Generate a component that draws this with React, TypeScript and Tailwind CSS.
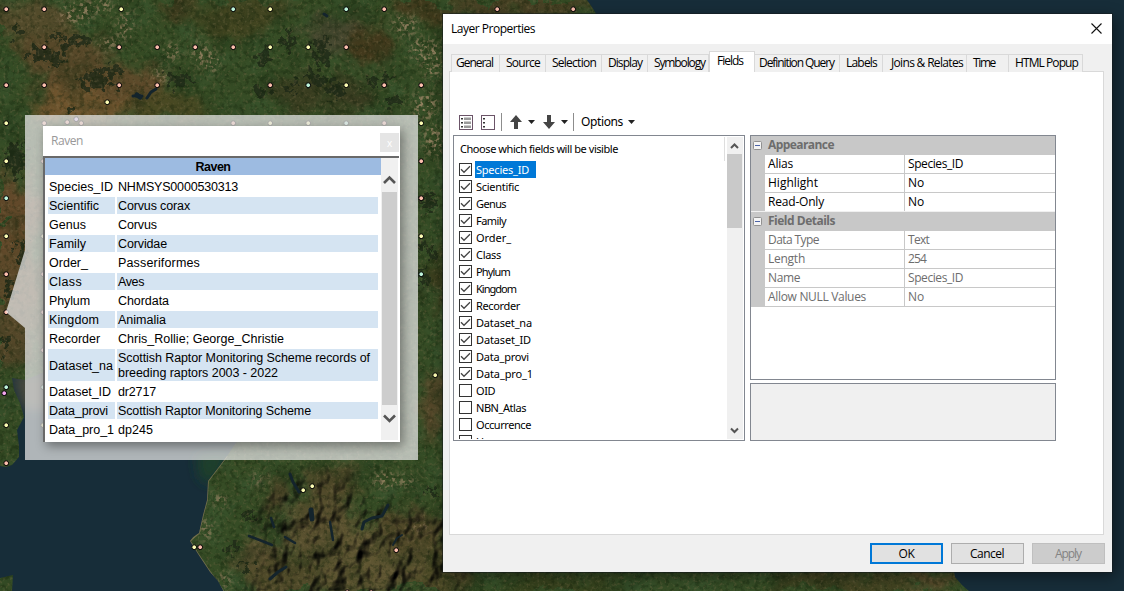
import { useLayoutEffect, useRef } from "react";
import type { ReactNode } from "react";

/** A single line of text whose tracking is adjusted so that it spans `w` pixels. */
function Fit({ w, children, className = "" }: { w: number; children: string; className?: string }) {
  const ref = useRef<HTMLSpanElement>(null);
  useLayoutEffect(() => {
    const el = ref.current;
    if (!el) return;
    el.style.letterSpacing = "0px";
    const natural = el.getBoundingClientRect().width;
    el.style.letterSpacing = `${(w - natural) / children.length}px`;
  }, [w, children]);
  return (
    <span ref={ref} className={`inline-block whitespace-pre ${className}`}>
      {children}
    </span>
  );
}

/* ---------- map ---------- */

const PINK = "#fdbfae";
const YELLOW = "#fdfdb4";
const MINT = "#bff5dc";
const VIOLET = "#f3a6ee";
const LILAC = "#d8b8e8";

const points: [number, number, string][] = [
  [6, 9, PINK], [44, 9, PINK], [121, 9, YELLOW], [233, 9, MINT], [270, 9, YELLOW], [346, 9, MINT], [384, 9, PINK], [497, 9, PINK], [573, 9, PINK],
  [44, 47, PINK], [119, 47, PINK], [157, 47, PINK], [195, 47, PINK], [233, 47, PINK], [270, 47, YELLOW], [308, 47, YELLOW], [346, 47, PINK],
  [6, 85, PINK], [44, 85, PINK], [119, 85, PINK], [157, 85, PINK], [270, 85, PINK], [308, 85, MINT], [346, 85, YELLOW], [384, 85, PINK], [421, 85, PINK],
  [107, 102, YELLOW],
  [6, 123, YELLOW], [44, 123, PINK], [67, 122, PINK], [76, 119, LILAC], [81, 123, PINK], [233, 123, PINK], [270, 123, YELLOW], [308, 123, YELLOW], [346, 123, MINT], [384, 123, PINK], [421, 123, YELLOW],
  [6, 161, YELLOW], [421, 161, PINK], [6, 198, MINT], [421, 198, PINK], [6, 236, YELLOW], [421, 236, YELLOW], [6, 274, PINK], [421, 274, MINT], [6, 312, PINK],
  [435, 375, YELLOW], [6, 387, MINT], [4, 393, VIOLET], [6, 425, YELLOW], [6, 463, PINK],
  [43, 161, PINK], [43, 236, YELLOW], [43, 274, PINK], [43, 312, PINK], [43, 350, PINK], [43, 387, MINT], [43, 425, YELLOW],
  [303, 490, YELLOW], [312, 486, YELLOW], [194, 547, YELLOW], [200, 547, PINK], [396, 550, PINK], [347, 592, PINK], [371, 592, PINK],
];

const moors: [number, number, number, number, string][] = [
  [25, 22, 46, 17, "#564b2c"], [60, 52, 46, 20, "#5a482a"], [104, 88, 66, 24, "#624a2b"], [80, 108, 52, 16, "#75562f"],
  [170, 106, 40, 12, "#4b4822"], [178, 8, 16, 14, "#4a3f21"], [232, 18, 38, 20, "#434420"], [262, 6, 34, 10, "#454622"],
  [335, 35, 32, 20, "#484831"], [368, 45, 24, 18, "#44381c"], [425, 8, 30, 14, "#443a1d"], [520, 5, 70, 12, "#4c4125"],
  [300, 92, 26, 18, "#3a3c20"], [350, 96, 26, 16, "#393a20"],
  [10, 225, 28, 54, "#66492b"], [18, 285, 26, 38, "#60482a"], [12, 340, 28, 26, "#57472a"],
  [436, 405, 14, 34, "#58482b"], [440, 280, 11, 34, "#3b3a1c"], [430, 570, 40, 32, "#504a28"],
  [332, 482, 26, 20, "#53492a"], [275, 500, 14, 20, "#4a4226"], [262, 558, 26, 20, "#655535"], [320, 530, 34, 32, "#5c5130"], [370, 560, 56, 34, "#625633"],
  [285, 580, 40, 22, "#524a2a"], [410, 530, 30, 24, "#54492a"], [560, 585, 60, 10, "#37401c"], [850, 582, 80, 12, "#464322"], [930, 580, 24, 10, "#5b492b"],
];

const woods: [number, number, number, number][] = [
  [18, 31, 6, 4], [55, 36, 8, 3], [42, 55, 13, 6], [68, 44, 9, 5], [80, 40, 8, 6], [58, 61, 9, 5], [93, 80, 12, 9], [110, 70, 11, 6],
  [112, 86, 6, 3], [70, 110, 4, 4], [290, 40, 5, 12], [264, 58, 6, 8], [322, 52, 9, 13], [336, 90, 9, 8], [292, 86, 6, 6], [262, 92, 6, 5],
  [178, 80, 12, 7], [318, 81, 8, 6], [428, 204, 8, 10], [424, 245, 5, 6], [432, 255, 6, 5], [424, 277, 5, 10], [430, 490, 7, 3],
  [22, 255, 5, 14], [10, 290, 6, 8], [16, 160, 10, 18], [6, 345, 4, 9], [250, 518, 7, 4], [232, 548, 6, 4], [245, 566, 8, 3],
  [310, 75, 5, 3], [372, 82, 7, 4], [386, 78, 6, 3], [395, 100, 7, 4],
];

const towns: [number, number, number, number][] = [
  [75, 14, 14, 8], [98, 5, 14, 5], [125, 25, 5, 12], [108, 44, 10, 3], [200, 52, 6, 8], [210, 62, 8, 8], [172, 52, 6, 6], [405, 25, 10, 8],
  [420, 50, 8, 10], [432, 60, 7, 18], [425, 105, 10, 12], [160, 75, 5, 5], [434, 140, 8, 14], [407, 481, 5, 4], [420, 525, 5, 3], [220, 500, 5, 4],
  [206, 530, 5, 8], [225, 580, 4, 5], [260, 479, 7, 3], [385, 480, 10, 6],
];

function SatelliteMap() {
  return (
    <svg className="absolute inset-0" width="1124" height="591" viewBox="0 0 1124 591">
      <defs>
        <clipPath id="land">
          <path d="M0 0H587L592 7L598 17L604 30L620 60V560H952L955 577L962 585L970 592H224L218 581L210 572L198 554L190 541L193 537L199 533L203 515L207 500L208 481L218 468L227 456L238 440L252 420L240 405L190 400L130 385L90 378L45 372L25 380L12 378L14 390L20 403L24 417L17 430L19 446L19 457L12 465L6 467L0 466Z" />
          <path d="M0 578L13 575L12 592H0Z" />
        </clipPath>
        <filter id="blur" x="-30%" y="-30%" width="160%" height="160%">
          <feGaussianBlur stdDeviation="6" />
        </filter>
        <filter id="rough" x="0" y="0" width="1124" height="591" filterUnits="userSpaceOnUse" colorInterpolationFilters="sRGB">
          <feGaussianBlur stdDeviation="6" result="b" />
          <feTurbulence type="fractalNoise" baseFrequency="0.04" numOctaves="4" seed="4" result="n" />
          <feDisplacementMap in="b" in2="n" scale="34" xChannelSelector="R" yChannelSelector="G" />
        </filter>
        <filter id="ragged" x="0" y="0" width="1124" height="591" filterUnits="userSpaceOnUse" colorInterpolationFilters="sRGB">
          <feTurbulence type="fractalNoise" baseFrequency="0.13" numOctaves="3" seed="9" result="n" />
          <feDisplacementMap in="SourceGraphic" in2="n" scale="26" xChannelSelector="R" yChannelSelector="G" />
          <feGaussianBlur stdDeviation="0.5" />
        </filter>
        <filter id="speckle" x="0" y="0" width="1124" height="591" filterUnits="userSpaceOnUse" colorInterpolationFilters="sRGB">
          <feTurbulence type="fractalNoise" baseFrequency="0.25" numOctaves="2" seed="12" result="n" />
          <feColorMatrix in="n" type="matrix" values="0 0 0 0 0  0 0 0 0 0  0 0 0 0 0  6 0 0 0 -3" result="m" />
          <feGaussianBlur in="SourceGraphic" stdDeviation="4" result="s" />
          <feComposite in="s" in2="m" operator="in" />
        </filter>
        <filter id="mottle" x="0" y="0" width="1124" height="591" filterUnits="userSpaceOnUse" colorInterpolationFilters="sRGB">
          <feTurbulence type="fractalNoise" baseFrequency="0.035" numOctaves="5" seed="21" />
          <feColorMatrix type="matrix" values="0 0 0 0 0.10  0 0 0 0 0.17  0 0 0 0 0.07  3 0 0 0 -1.45" />
        </filter>
        <filter id="meadow" x="0" y="0" width="1124" height="591" filterUnits="userSpaceOnUse" colorInterpolationFilters="sRGB">
          <feTurbulence type="fractalNoise" baseFrequency="0.04" numOctaves="4" seed="33" />
          <feColorMatrix type="matrix" values="0 0 0 0 0.23  0 0 0 0 0.35  0 0 0 0 0.20  0 3 0 0 -1.3" />
        </filter>
        <filter id="grain" x="0" y="0" width="1124" height="591" filterUnits="userSpaceOnUse" colorInterpolationFilters="sRGB">
          <feTurbulence type="fractalNoise" baseFrequency="0.3" numOctaves="2" seed="5" />
          <feColorMatrix type="matrix" values="0 0 0 0 0.50  0 0 0 0 0.44  0 0 0 0 0.30  0 0 4 0 -2.2" />
        </filter>
        <filter id="shade" x="0" y="0" width="1124" height="591" filterUnits="userSpaceOnUse" colorInterpolationFilters="sRGB">
          <feTurbulence type="fractalNoise" baseFrequency="0.2" numOctaves="3" seed="15" />
          <feColorMatrix type="matrix" values="0 0 0 0 0.06  0 0 0 0 0.12  0 0 0 0 0.03  4 0 0 0 -1.9" />
        </filter>
        <filter id="relief" x="0" y="0" width="1124" height="591" filterUnits="userSpaceOnUse" colorInterpolationFilters="sRGB">
          <feTurbulence type="fractalNoise" baseFrequency="0.05 0.036" numOctaves="3" seed="8" result="n" />
          <feColorMatrix in="n" type="matrix" values="0 0 0 0 0  0 0 0 0 0  0 0 0 0 0  1 0 0 0 0" result="h" />
          <feDiffuseLighting in="h" surfaceScale="9" diffuseConstant="1.3" lightingColor="#ffffff" result="l">
            <feDistantLight azimuth="225" elevation="50" />
          </feDiffuseLighting>
          <feGaussianBlur in="SourceAlpha" stdDeviation="10" result="a" />
          <feComposite in="l" in2="a" operator="in" />
        </filter>
      </defs>

      <rect width="1124" height="591" fill="#172d39" />
      <g filter="url(#blur)">
        <path d="M196 455L232 450L212 485L200 478Z" fill="#1f3f2b" />
        <path d="M12 375L60 370L120 390L45 410L22 410Z" fill="#474a3c" />
      </g>

      <g clipPath="url(#land)">
        <rect width="1124" height="591" fill="#364c25" />
        <rect width="1124" height="591" filter="url(#meadow)" opacity="0.5" />
        <g filter="url(#rough)" opacity="0.92">
          {moors.map(([x, y, rx, ry, fill], i) => (
            <ellipse key={i} cx={x} cy={y} rx={rx} ry={ry} fill={fill} />
          ))}
        </g>
        <rect width="1124" height="591" filter="url(#mottle)" opacity="0.38" />
        <g filter="url(#ragged)" fill="#1f2a18" opacity="0.8">
          {woods.map(([x, y, rx, ry], i) => (
            <ellipse key={i} cx={x} cy={y} rx={rx} ry={ry} />
          ))}
        </g>
        <g filter="url(#speckle)" fill="#a58b6c" opacity="0.8">
          {towns.map(([x, y, rx, ry], i) => (
            <ellipse key={i} cx={x} cy={y} rx={rx + 3} ry={ry + 3} />
          ))}
        </g>
        <rect width="1124" height="591" filter="url(#shade)" opacity="0.32" />
        <rect width="1124" height="591" filter="url(#grain)" opacity="0.32" />
        <g className="mix-blend-multiply">
          <path filter="url(#relief)" d="M258 500L290 475L345 470L360 500L400 505L460 520V610H235L262 560Z" fill="#000" />
        </g>
        <g fill="none" stroke="#14242c" strokeLinecap="round" strokeLinejoin="round">
          <path d="M290 474L293 482L299 492" strokeWidth="3" />
          <path d="M311 510L312 519" strokeWidth="5" />
          <path d="M330 522L333 540" strokeWidth="2.5" />
          <path d="M271 518L274 527" strokeWidth="2.5" />
          <path d="M249 536L262 541L272 545M285 537L295 543" strokeWidth="2.5" />
          <path d="M362 529L364 522L372 518L382 516L388 505" strokeWidth="3" />
          <path d="M393 545L397 538L402 535" strokeWidth="2" />
          <path d="M270 579L278 572L286 567" strokeWidth="3" />
          <path d="M133 96L142 96M147 98L151 92L156 89" strokeWidth="3" />
          <path d="M137 95L140 97" strokeWidth="5" />
          <path d="M324 14L327 16" strokeWidth="3" />
        </g>
        <path d="M227 456L208 481L207 500L203 515L199 533L190 541L198 554L210 572L224 592" fill="none" stroke="#8b7c5c" strokeWidth="1.6" opacity="0.7" />
      </g>

      {points.map(([x, y, fill], i) => (
        <circle key={i} cx={x + 0.2} cy={y + 0.2} r="2.4" fill={fill} stroke="#000" strokeWidth="1" />
      ))}
      <path d="M25 115H418V460H25V328L6 312L25 250Z" fill="#e8e8e8" fillOpacity="0.73" />
    </svg>
  );
}

/* ---------- identify popup ---------- */

const attributes: { name: string; nw: number; value: string[]; vw: number[] }[] = [
  { name: "Species_ID", nw: 64, value: ["NHMSYS0000530313"], vw: [120] },
  { name: "Scientific", nw: 50, value: ["Corvus corax"], vw: [72] },
  { name: "Genus", nw: 37, value: ["Corvus"], vw: [39] },
  { name: "Family", nw: 37, value: ["Corvidae"], vw: [49] },
  { name: "Order_", nw: 39, value: ["Passeriformes"], vw: [82] },
  { name: "Class", nw: 33, value: ["Aves"], vw: [26] },
  { name: "Phylum", nw: 41, value: ["Chordata"], vw: [51] },
  { name: "Kingdom", nw: 50, value: ["Animalia"], vw: [48] },
  { name: "Recorder", nw: 51, value: ["Chris_Rollie; George_Christie"], vw: [166] },
  { name: "Dataset_na", nw: 64, value: ["Scottish Raptor Monitoring Scheme records of", "breeding raptors 2003 - 2022"], vw: [252, 160] },
  { name: "Dataset_ID", nw: 62, value: ["dr2717"], vw: [38] },
  { name: "Data_provi", nw: 59, value: ["Scottish Raptor Monitoring Scheme"], vw: [193] },
  { name: "Data_pro_1", nw: 65, value: ["dp245"], vw: [35] },
];

function RavenPopup() {
  return (
    <section className="absolute left-[43px] top-[126px] flex h-[316px] w-[357px] flex-col bg-white shadow-[3px_4px_10px_rgba(0,0,0,0.4)]">
      <header className="flex h-[30px] shrink-0 justify-between pl-2 pr-px pt-[7px] font-['Open_Sans',sans-serif] text-xs leading-4 text-[#999999]">
        <Fit w={32}>Raven</Fit>
        <button className="flex h-[19px] w-[19px] items-center justify-center bg-[#e5e5e5] text-[10px] text-white">x</button>
      </header>
      <div className="mr-px flex min-h-0 flex-1 border-l-2 border-t-2 border-[#696969] bg-white font-['Liberation_Sans',Arial,sans-serif] text-[12.5px] text-black">
        <div className="flex w-[336px] flex-col">
          <div className="mb-[3px] flex h-[17px] shrink-0 items-center justify-center bg-[#9dbbe1] pt-px font-bold">
            <Fit w={35}>Raven</Fit>
          </div>
          <div className="flex flex-col gap-0.5 pl-[3px]">
            {attributes.map((row, i) => {
              const tint = i % 2 ? "bg-[#d5e4f2]" : "bg-white";
              return (
                <div key={row.name} className="flex gap-0.5 leading-[15px]">
                  <div className={`flex w-[67px] items-center pl-px pt-0.5 ${tint}`}>
                    <Fit w={row.nw}>{row.name}</Fit>
                  </div>
                  <div className={`flex w-[261px] flex-col pl-px pt-0.5 ${tint}`}>
                    {row.value.map((line, k) => (
                      <Fit key={line} w={row.vw[k]} className="self-start">{line}</Fit>
                    ))}
                  </div>
                </div>
              );
            })}
          </div>
        </div>
        <div className="mb-0.5 flex w-[17px] flex-col items-center bg-[#f0f0f0]">
          <svg width="17" height="34" viewBox="0 0 17 34" className="shrink-0">
            <path d="M3 25L8.500 19.500L14 25" fill="none" stroke="#555" strokeWidth="2.6" />
          </svg>
          <div className="h-[213px] w-[15px] shrink-0 bg-[#cdcdcd]" />
          <svg width="17" height="30" viewBox="0 0 17 30" className="shrink-0">
            <path d="M3 10.500L8.500 16L14 10.500" fill="none" stroke="#555" strokeWidth="2.6" />
          </svg>
        </div>
      </div>
    </section>
  );
}

/* ---------- layer properties dialog ---------- */

function TabStrip() {
  const base = "flex h-[18px] border-t border-r border-[#d9d9d9] bg-[#f0f0f0]";
  return (
    <nav className="relative z-10 -mb-px flex h-[21px] items-end pl-0.5 font-['Open_Sans','Segoe_UI',sans-serif] text-xs leading-4 text-black">
      <div className={`${base} w-[49px] border-l pl-[4px]`}><Fit w={37}>General</Fit></div>
      <div className={`${base} w-[46px] pl-[6px]`}><Fit w={34}>Source</Fit></div>
      <div className={`${base} w-[56px] pl-[6px]`}><Fit w={44}>Selection</Fit></div>
      <div className={`${base} w-[46px] pl-[6px]`}><Fit w={34}>Display</Fit></div>
      <div className={`${base} w-[61px] pl-[6px]`}><Fit w={51}>Symbology</Fit></div>
      <div className="flex h-[21px] w-[46px] border-x border-t border-[#d9d9d9] bg-white pl-[7px] pt-px"><Fit w={26}>Fields</Fit></div>
      <div className={`${base} w-[85px] pl-[4px]`}><Fit w={75}>Definition Query</Fit></div>
      <div className={`${base} w-[43px] pl-[6px]`}><Fit w={31}>Labels</Fit></div>
      <div className={`${base} w-[84px] pl-[8px]`}><Fit w={72}>{"Joins & Relates"}</Fit></div>
      <div className={`${base} w-[42px] pl-[6px]`}><Fit w={22}>Time</Fit></div>
      <div className={`${base} w-[74px] pl-[6px]`}><Fit w={63}>HTML Popup</Fit></div>
    </nav>
  );
}

function Caret() {
  return (
    <svg width="7" height="4" viewBox="0 0 7 4" className="shrink-0">
      <path d="M0 0H7L3.500 4Z" fill="#222" />
    </svg>
  );
}

function ListIcon({ filled }: { filled: boolean }) {
  return (
    <svg width="14" height="15" viewBox="0 0 14 15" className="shrink-0">
      <rect x="0.5" y="0.5" width="13" height="14" fill="#fff" stroke="#6b5468" />
      <path d="M2 3h2v1.500h-2zM2 7h2v1.500h-2zM2 11h2v1.500h-2z" fill="#333" />
      {filled && <path d="M5 2.500h7v2.500h-7zM5 6.500h7v2.500h-7zM5 10.500h7v2.500h-7z" fill="#9a9a9a" />}
    </svg>
  );
}

function MoveArrow({ down }: { down?: boolean }) {
  return (
    <svg width="12" height="14" viewBox="0 0 12 14" className={`shrink-0 ${down ? "rotate-180" : ""}`}>
      <path d="M6 0L12 7H8V14H4V7H0Z" fill="#454545" />
    </svg>
  );
}

function Toolbar() {
  return (
    <div className="flex h-[20px] items-center pl-[9px] text-black">
      <ListIcon filled />
      <div className="w-[8px]" />
      <ListIcon filled={false} />
      <div className="ml-[6px] h-[18px] w-px bg-[#8d8d8d]" />
      <div className="ml-[8px] flex items-center gap-[6px]">
        <MoveArrow />
        <Caret />
      </div>
      <div className="ml-[8px] flex items-center gap-[6px]">
        <MoveArrow down />
        <Caret />
      </div>
      <div className="ml-[5px] h-[18px] w-px bg-[#8d8d8d]" />
      <div className="ml-[7px] flex items-center gap-[5px] font-['Noto_Sans',sans-serif] text-xs leading-4">
        <Fit w={42}>Options</Fit>
        <Caret />
      </div>
    </div>
  );
}

const fields: [string, number, boolean][] = [
  ["Species_ID", 53, true], ["Scientific", 43, true], ["Genus", 30, true], ["Family", 30, true], ["Order_", 35, true], ["Class", 25, true],
  ["Phylum", 34, true], ["Kingdom", 40, true], ["Recorder", 44, true], ["Dataset_na", 56, true], ["Dataset_ID", 55, true], ["Data_provi", 53, true],
  ["Data_pro_1", 57, true], ["OID", 19, false], ["NBN_Atlas", 50, false], ["Occurrence", 55, false], ["Use", 18, false],
];

function FieldList() {
  return (
    <div className="flex h-[306px] w-[292px] border border-[#828790] bg-white p-px font-['Noto_Sans','Open_Sans',sans-serif] text-[11px] text-black">
      <div className="flex min-w-0 flex-1 flex-col overflow-hidden">
        <div className="flex h-[24px] w-[270px] shrink-0 items-center border-r border-[#dedede] pl-[5px]">
          <Fit w={158}>Choose which fields will be visible</Fit>
        </div>
        {fields.map(([name, w, on], i) => (
          <div key={name} className="flex h-[17px] shrink-0 items-center pl-[4px]">
            <svg width="13" height="13" viewBox="0 0 13 13" className="shrink-0">
              <rect x="0.5" y="0.5" width="12" height="12" fill="#fff" stroke="#333" />
              {on && <path d="M2 6.300L5 9.300L11 3.200" fill="none" stroke="#444" strokeWidth="1.3" />}
            </svg>
            <div className={`ml-[3px] flex h-[17px] items-center pl-[1px] leading-4 ${i === 0 ? "w-[61px] bg-[#0078d7] text-white" : ""}`}>
              <Fit w={w}>{name}</Fit>
            </div>
          </div>
        ))}
      </div>
      <div className="flex w-[16px] flex-col bg-[#f0f0f0]">
        <svg width="15" height="17" viewBox="0 0 15 17" className="shrink-0">
          <path d="M4 11L7.500 7.500L11 11" fill="none" stroke="#555" strokeWidth="2" />
        </svg>
        <div className="h-[74px] w-[15px] bg-[#c9c9c9]" />
        <div className="flex-1" />
        <svg width="15" height="17" viewBox="0 0 15 17" className="shrink-0">
          <path d="M4 6.500L7.500 10L11 6.500" fill="none" stroke="#555" strokeWidth="2" />
        </svg>
      </div>
    </div>
  );
}

function GroupHeader({ w, children }: { w: number; children: string }) {
  return (
    <div className="flex h-[19px] items-center bg-[#c8c8c8] pl-[2px] font-bold text-[#6d6d6d]">
      <svg width="9" height="9" viewBox="0 0 9 9" className="shrink-0">
        <rect x="0.5" y="0.5" width="8" height="8" rx="1" fill="#f4f4f4" stroke="#919191" />
        <path d="M2 4.500H7" stroke="#4b63a7" />
      </svg>
      <div className="pb-px pl-[6px]">
        <Fit w={w}>{children}</Fit>
      </div>
    </div>
  );
}

function PropertyRow({ name, nw, value, vw, muted }: { name: string; nw: number; value: string; vw: number; muted?: boolean }) {
  return (
    <div className={`flex h-[19px] border-b border-[#c8c8c8] leading-[18px] ${muted ? "text-[#6d6d6d]" : "text-black"}`}>
      <div className="w-[140px] border-r border-[#c8c8c8] pl-[3px]">
        <Fit w={nw}>{name}</Fit>
      </div>
      <div className="pl-[3px]">
        <Fit w={vw}>{value}</Fit>
      </div>
    </div>
  );
}

function Gutter({ children }: { children: ReactNode }) {
  return (
    <div className="flex">
      <div className="w-[14px] bg-[#c8c8c8]" />
      <div className="flex-1">{children}</div>
    </div>
  );
}

function PropertyGrid() {
  return (
    <div className="h-[245px] border border-[#828790] bg-white font-['Open_Sans',sans-serif] text-xs">
      <GroupHeader w={66}>Appearance</GroupHeader>
      <Gutter>
        <PropertyRow name="Alias" nw={25} value="Species_ID" vw={55} />
        <PropertyRow name="Highlight" nw={50} value="No" vw={16} />
        <PropertyRow name="Read-Only" nw={56} value="No" vw={16} />
      </Gutter>
      <div className="relative -mt-px h-px bg-[#f0f0f0]" />
      <GroupHeader w={67}>Field Details</GroupHeader>
      <Gutter>
        <PropertyRow muted name="Data Type" nw={51} value="Text" vw={21} />
        <PropertyRow muted name="Length" nw={37} value="254" vw={18} />
        <PropertyRow muted name="Name" nw={32} value="Species_ID" vw={55} />
        <PropertyRow muted name="Allow NULL Values" nw={98} value="No" vw={16} />
      </Gutter>
    </div>
  );
}

function LayerProperties() {
  const button = "flex h-[21px] w-[73px] items-center justify-center";
  return (
    <section className="absolute left-[443px] top-[14px] flex h-[558px] w-[669px] flex-col bg-[#f0f0f0] shadow-[0_0_0_1px_rgba(20,25,28,0.5),3px_4px_14px_rgba(0,0,0,0.45)]">
      <header className="flex h-[30px] shrink-0 items-center justify-between bg-white pl-2 pr-[10px] font-['Open_Sans',sans-serif] text-xs text-black">
        <Fit w={84}>Layer Properties</Fit>
        <svg width="11" height="11" viewBox="0 0 11 11" className="mb-[2px]">
          <path d="M0.500 0.500L10.500 10.500M10.500 0.500L0.500 10.500" stroke="#111" strokeWidth="1.1" />
        </svg>
      </header>
      <div className="flex flex-col pl-[6px] pr-[8px] pt-[7px]">
        <TabStrip />
        <div className="flex h-[464px] flex-col border border-[#d9d9d9] bg-white pt-[40px]">
          <Toolbar />
          <div className="flex gap-[5px] pl-[3px] pt-[3px]">
            <FieldList />
            <div className="flex w-[306px] flex-col gap-[3px]">
              <PropertyGrid />
              <div className="h-[58px] border border-[#828790] bg-[#f0f0f0]" />
            </div>
          </div>
        </div>
      </div>
      <footer className="flex justify-end gap-[8px] pr-[7px] pt-[8px] font-['Open_Sans',sans-serif] text-xs text-black">
        <button className={`${button} border-2 border-[#0078d7] bg-[#e1e1e1]`}><Fit w={16}>OK</Fit></button>
        <button className={`${button} border border-[#adadad] bg-[#e1e1e1] pr-px`}><Fit w={34}>Cancel</Fit></button>
        <button className={`${button} border border-[#bfbfbf] bg-[#cccccc] pr-px text-[#838383]`}><Fit w={26}>Apply</Fit></button>
      </footer>
    </section>
  );
}

export default function App() {
  return (
    <main className="relative h-[591px] w-[1124px] overflow-hidden bg-[#172d39]">
      <SatelliteMap />
      <RavenPopup />
      <LayerProperties />
    </main>
  );
}
